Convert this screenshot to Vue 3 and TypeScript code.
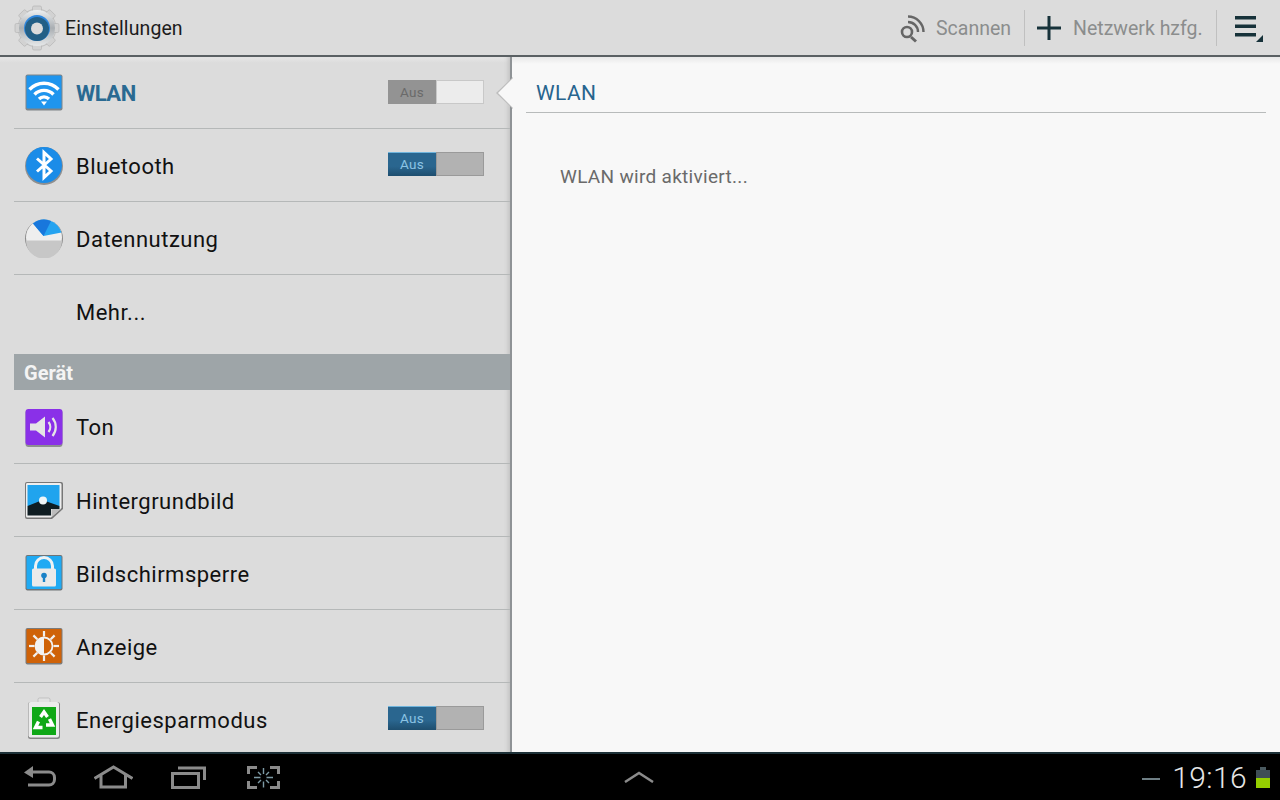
<script setup lang="ts">
interface Row { label: string; icon: string; toggle?: 'on' | 'off'; active?: boolean }
const top: Row[] = [
  { label: 'WLAN', icon: 'wifi', toggle: 'off', active: true },
  { label: 'Bluetooth', icon: 'bt', toggle: 'on' },
  { label: 'Datennutzung', icon: 'data' },
  { label: 'Mehr...', icon: '' },
]
const device: Row[] = [
  { label: 'Ton', icon: 'sound' },
  { label: 'Hintergrundbild', icon: 'wall' },
  { label: 'Bildschirmsperre', icon: 'lock' },
  { label: 'Anzeige', icon: 'display' },
  { label: 'Energiesparmodus', icon: 'power', toggle: 'on' },
]
const rays = [0, 45, 90, 135, 180, 225, 270, 315]
</script>

<template>
  <div class="screen">
    <header class="actionbar">
      <div class="brand">
        <svg class="gear" width="46" height="46" viewBox="0 0 46 46">
          <defs>
            <linearGradient id="silver" x1="0" y1="0" x2="0" y2="1">
              <stop offset="0" stop-color="#eef0f1" />
              <stop offset="0.5" stop-color="#a9aeb2" />
              <stop offset="1" stop-color="#e6e8e9" />
            </linearGradient>
          </defs>
          <g fill="#d2d2d2" stroke="#b0b0b0" stroke-width="0.6">
            <circle cx="23" cy="23" r="19" />
            <rect v-for="r in rays" :key="r" x="18.500" y="1" width="9" height="7" rx="1.500" :transform="`rotate(${r} 23 23)`" />
          </g>
          <circle cx="23" cy="23" r="18" fill="url(#silver)" />
          <circle cx="23" cy="23" r="13" fill="#2f86dc" />
          <circle cx="23" cy="24" r="12" fill="#235f86" />
          <circle cx="23" cy="23.500" r="6" fill="#dcdcdc" />
        </svg>
        <span class="title">Einstellungen</span>
      </div>
      <div class="actions">
        <svg width="28" height="30" viewBox="0 0 28 30" class="a-scan">
          <g fill="none" stroke="#666" stroke-width="2.400">
            <circle cx="9" cy="19" r="5" stroke-width="2.600" />
            <path d="M13 24l5 4.500" stroke-width="3" />
            <path d="M10 9a10 10 0 0 1 10 10" />
            <path d="M10 3.500a15.500 15.500 0 0 1 15.500 15.500" />
          </g>
        </svg>
        <span class="a-label scan-label">Scannen</span>
        <i class="a-sep"></i>
        <svg width="24" height="24" viewBox="0 0 24 24" class="a-plus">
          <path d="M0 10.500h24v3H0zM10.500 0h3v24h-3z" fill="#17323a" />
        </svg>
        <span class="a-label net-label">Netzwerk hzfg.</span>
        <i class="a-sep"></i>
        <svg width="28" height="28" viewBox="0 0 28 28" class="a-menu">
          <path d="M0 1h21v3.500H0zM0 9.500h21v3.500H0zM0 18h21v3.500H0z" fill="#17323a" />
          <path d="M28 20v7h-7z" fill="#17323a" />
        </svg>
      </div>
    </header>

    <main class="body">
      <aside class="side">
        <template v-for="(group, gi) in [top, device]" :key="gi">
          <div v-if="gi === 1" class="section">Gerät</div>
          <div class="rows" :class="gi === 0 ? 'first' : 'second'">
            <div v-for="row in group" :key="row.label" class="row">
              <div class="icon">
                <svg v-if="row.icon" width="40" height="40" viewBox="0 0 40 40">
                  <template v-if="row.icon === 'wifi'">
                    <rect x="1.500" y="1.500" width="37" height="36" rx="2" fill="#7f8488" />
                    <rect x="2.500" y="2.500" width="35" height="33" rx="1" fill="#1f95ee" />
                    <g fill="none" stroke="#fff" stroke-width="3.400">
                      <path d="M5.500 16.500a20 20 0 0 1 29 0" />
                      <path d="M10.500 21.500a13 13 0 0 1 19 0" />
                      <path d="M15 26a7 7 0 0 1 10 0" />
                    </g>
                    <path d="M17 28.500h6L20 32.500z" fill="#fff" />
                  </template>
                  <template v-else-if="row.icon === 'bt'">
                    <circle cx="20" cy="21" r="19" fill="#8f8f8f" />
                    <circle cx="20" cy="20" r="18" fill="#1b8ce8" />
                    <path d="M13 13.500L27 26l-7 6.500V7.500l7 6.500-14 12.500" fill="none" stroke="#fff" stroke-width="3" stroke-linejoin="miter" />
                  </template>
                  <template v-else-if="row.icon === 'data'">
                    <circle cx="20" cy="20.500" r="19" fill="#8a8a8a" />
                    <circle cx="20" cy="19.500" r="18" fill="#eeeeee" />
                    <path d="M2 22.500H38A18 18 0 0 1 2 22.500z" fill="#c7c7c7" />
                    <path d="M9 5.500L19.500 18 37.500 14.500A18 18 0 0 0 9 5.500z" fill="#25a3f0" />
                    <path d="M9 5.500A18 18 0 0 1 27 3L19.500 18z" fill="#1877dc" />
                  </template>
                  <template v-else-if="row.icon === 'sound'">
                    <rect x="1.500" y="2" width="37" height="37" rx="3" fill="#8d8f90" />
                    <rect x="1.500" y="1" width="37" height="36" rx="3" fill="#8a30e8" />
                    <path d="M6 15.500h6l9-7v21l-9-7H6z" fill="#e5e5e5" />
                    <g fill="none" stroke="#e5e5e5" stroke-width="2.200">
                      <path d="M24.500 14a8 8 0 0 1 0 10" />
                      <path d="M28.500 10a14 14 0 0 1 0 18" />
                    </g>
                  </template>
                  <template v-else-if="row.icon === 'wall'">
                    <path d="M3 1h34a2 2 0 0 1 2 2v25L28 38H3a2 2 0 0 1-2-2V3a2 2 0 0 1 2-2z" fill="#777" />
                    <path d="M3 2h33a1.500 1.500 0 0 1 1.500 1.500V27L27 36.500H3.500A1.500 1.500 0 0 1 2 35V3.500A1.500 1.500 0 0 1 3 2z" fill="#eee" />
                    <rect x="3.500" y="4" width="32" height="21" fill="#20a4ee" />
                    <path d="M3.500 25l15-6 17 6v3h-8.500v6.500H3.500z" fill="#0f1d22" />
                    <circle cx="19" cy="19.500" r="4" fill="#eef6f8" />
                    <path d="M27.500 36v-7a1 1 0 0 1 1-1H37z" fill="#bcbcbc" />
                  </template>
                  <template v-else-if="row.icon === 'lock'">
                    <rect x="1.500" y="1" width="37" height="35.500" rx="2" fill="#6f7477" />
                    <rect x="2.500" y="2" width="35" height="33" rx="1" fill="#20aaf3" />
                    <path d="M11.500 15V12a8.500 8.500 0 0 1 17 0v3" fill="none" stroke="#eef2f4" stroke-width="3" />
                    <rect x="8" y="14.500" width="24" height="18" rx="1.500" fill="#eaeaea" />
                    <circle cx="20" cy="21.500" r="2.800" fill="#1a82c7" />
                    <path d="M18.800 22h2.400v6h-2.400z" fill="#1a82c7" />
                  </template>
                  <template v-else-if="row.icon === 'display'">
                    <rect x="1.500" y="1" width="37" height="36.500" rx="2" fill="#7b7b7b" />
                    <rect x="2.500" y="2" width="35" height="34" rx="1" fill="#cf6208" />
                    <path v-for="r in rays" :key="r" d="M20 4V9.500" stroke="#f0f0f0" stroke-width="2.200" :transform="`rotate(${r} 20 19)`" />
                    <circle cx="20" cy="19" r="8.500" fill="#cf6208" stroke="#f2f2f2" stroke-width="1.800" />
                    <path d="M20 10.500a8.500 8.500 0 0 0 0 17z" fill="#f2f2f2" />
                  </template>
                  <template v-else-if="row.icon === 'power'">
                    <rect x="14" y="-2" width="12" height="5" rx="1.500" fill="#e2e2e2" stroke="#b4b4b4" stroke-width="0.700" />
                    <rect x="4" y="2" width="32" height="37" rx="2.500" fill="#868686" />
                    <rect x="4.500" y="2" width="30.500" height="35.500" rx="2" fill="#ececec" />
                    <rect x="8" y="7" width="24" height="28" fill="#10a817" />
                    <g fill="none" stroke="#fff" stroke-width="3.400">
                      <path d="M16.500 17l3.500-5 3.500 5" />
                      <path d="M25.500 19l3 6h-6.500" />
                      <path d="M18.500 27.500h-7l3-6" />
                    </g>
                  </template>
                </svg>
              </div>
              <span class="label" :class="{ active: row.active }">{{ row.label }}</span>
              <div v-if="row.toggle === 'off'" class="toggle t-off"><b>Aus</b><em></em></div>
              <div v-if="row.toggle === 'on'" class="toggle t-on"><b>Aus</b><em></em></div>
            </div>
          </div>
        </template>
      </aside>
      <section class="detail">
        <i class="notch"></i>
        <h1 class="d-title">WLAN</h1>
        <p class="d-text">WLAN wird aktiviert...</p>
      </section>
    </main>

    <footer class="navbar">
      <div class="nav-left">
        <svg width="32" height="22" viewBox="0 0 32 22">
          <path d="M8 6h17a5.500 5.500 0 0 1 5.500 5.500v2A5.500 5.500 0 0 1 25 19H4" fill="none" stroke="#8b8b8b" stroke-width="3" />
          <path d="M0 6.500L9 0v12z" fill="#8b8b8b" />
        </svg>
        <svg width="39" height="24" viewBox="0 0 39 24">
          <path d="M0.500 13.500L19.500 2l19 11.500M7 10v12h24.500V10" fill="none" stroke="#8b8b8b" stroke-width="3" />
        </svg>
        <svg width="35" height="23" viewBox="0 0 35 23">
          <g fill="none" stroke="#8b8b8b" stroke-width="3">
            <rect x="1.500" y="7.500" width="26" height="14" />
            <path d="M7 2h26.500v12" />
          </g>
        </svg>
        <svg class="nav-shot" width="33" height="23" viewBox="0 0 33 23">
          <path d="M1.500 8V1.500H10M23 1.500h8.500V8M31.500 15v6.500H23M10 21.500H1.500V15" fill="none" stroke="#8b8b8b" stroke-width="3" />
          <path d="M16.500 2v6M16.500 15.500v6M7 11.500h6.500M19.500 11.500H26M11 6l3 3M22 6l-3 3M11 17l3-3M22 17l-3-3" stroke="#7d9aa5" stroke-width="1.400" />
        </svg>
      </div>
      <svg class="nav-up" width="30" height="12" viewBox="0 0 30 12">
        <path d="M1 11L15 2l14 9" fill="none" stroke="#8b8b8b" stroke-width="2.500" />
      </svg>
      <div class="nav-right">
        <i class="dash"></i>
        <span class="clock">19:16</span>
        <svg width="14" height="21" viewBox="0 0 14 21">
          <rect x="4" y="0" width="6" height="3" fill="#4a5a60" />
          <rect x="0" y="3" width="14" height="8" fill="#3e4e55" />
          <rect x="0" y="11" width="14" height="10" fill="#95cf00" />
        </svg>
      </div>
    </footer>
  </div>
</template>

<style>
html, body { margin: 0; padding: 0; background: #000; }
</style>

<style scoped>
.screen { width: 1280px; height: 800px; display: flex; flex-direction: column; overflow: hidden; font-family: Roboto, "Liberation Sans", sans-serif; background: #dcdcdc; }
.actionbar { height: 55px; box-sizing: border-box; flex: none; display: flex; justify-content: space-between; align-items: center; background: #dcdcdc; padding: 0 0 0 14px; }
.brand { display: flex; align-items: center; gap: 5px; }
.gear { margin-top: 1px; }
.title { font-size: 19.500px; letter-spacing: 0.1px; color: #1c1c1c; padding-top: 2px; }
.actions { display: flex; align-items: center; height: 55px; }
.a-scan { margin-right: 10px; }
.a-label { font-size: 19.500px; color: #8b8d8d; white-space: nowrap; padding-top: 2px; }
.scan-label { width: 88px; }
.net-label { width: 143px; }
.a-sep { width: 1px; height: 36px; background: #c0c0c0; display: block; }
.a-plus { margin: 0 12px 0 12px; }
.a-menu { margin: 3px 17px 0 18px; }
.body { flex: 1; min-height: 0; display: flex; border-top: 2px solid #5a6063; }
.side { width: 510px; flex: none; background: linear-gradient(#e6e6e6, #dcdcdc 6px); border-right: 2px solid #8f9396; box-shadow: inset -5px 0 4px -3px #c2c2c2; overflow: hidden; }
.rows { display: flex; flex-direction: column; }
.rows.first { margin-bottom: 7px; }
.row { height: 72px; margin-left: 14px; display: flex; align-items: center; border-bottom: 1px solid #b5b8b8; }
.rows .row:last-child { border-bottom: 0; }
.rows.first .row:first-child { height: 71px; }
.rows.second .row:first-child { height: 73px; }
.rows.second .icon { margin-top: 2px; }
.rows.second .row:last-child .icon svg { overflow: visible; }
.icon { width: 40px; height: 40px; margin: 0 12px 0 10px; flex: none; }
.label { font-size: 22px; letter-spacing: 0.5px; color: #111; flex: 1; padding-top: 2px; }
.label.active { color: #2a6a92; font-weight: 700; letter-spacing: -0.5px; }
.toggle { width: 96px; height: 24px; display: flex; margin: -2px 26px 0 0; box-sizing: border-box; font-size: 13.500px; }
.toggle b { width: 48px; font-weight: 400; text-align: center; line-height: 25px; letter-spacing: 0.3px; }
.toggle em { flex: 1; }
.t-off b { background: #939393; color: #6a6a6a; }
.t-off em { background: #ececec; border: 1px solid #c8c8c8; }
.t-on b { background: linear-gradient(#2a668f 60%, #1e4e6e); color: #8cc4e4; box-shadow: inset 0 1px #6fb4dc; }
.t-on em { background: #b2b2b2; border: 1px solid #9a9a9a; }
.section { height: 36px; margin-left: 14px; background: #9ea5a8; color: #f4f4f4; font-size: 20px; font-weight: 700; line-height: 38px; padding-left: 10px; }
.detail { flex: 1; background: linear-gradient(#e8e8e8, #f8f8f8 7px); position: relative; padding: 0 14px; }
.notch { position: absolute; left: -16px; top: 20px; width: 17px; height: 32px; background: #bdbdbd; clip-path: polygon(100% 0, 0 50%, 100% 100%); }
.notch::after { content: ""; position: absolute; left: 2px; top: 1px; width: 15px; height: 30px; background: #f8f8f8; clip-path: polygon(100% 0, 0 50%, 100% 100%); }
.d-title { margin: 0; padding: 0 0 0 10px; height: 56px; box-sizing: border-box; border-bottom: 1px solid #b8bbbb; font-size: 21px; font-weight: 400; letter-spacing: 0.4px; color: #27648e; line-height: 72px; }
.d-text { margin: 53px 0 0 34px; font-size: 19px; letter-spacing: 0.3px; color: #6a6a6a; line-height: 22px; }
.navbar { height: 48px; flex: none; box-sizing: border-box; background: #000; border-top: 2px solid #1d3138; display: flex; align-items: center; position: relative; }
.nav-left { display: flex; align-items: center; gap: 38px; margin-left: 24px; }
.nav-shot { margin-left: 3px; }
.nav-up { position: absolute; left: 624px; top: 17px; }
.nav-right { position: absolute; right: 10px; top: 0; height: 46px; display: flex; align-items: center; }
.dash { width: 18px; height: 2px; background: #6f7f85; display: block; margin-right: 12px; margin-top: 3px; }
.clock { font-size: 30px; color: #e6e6e6; margin-right: 9px; letter-spacing: 0.4px; font-weight: 300; }
</style>
